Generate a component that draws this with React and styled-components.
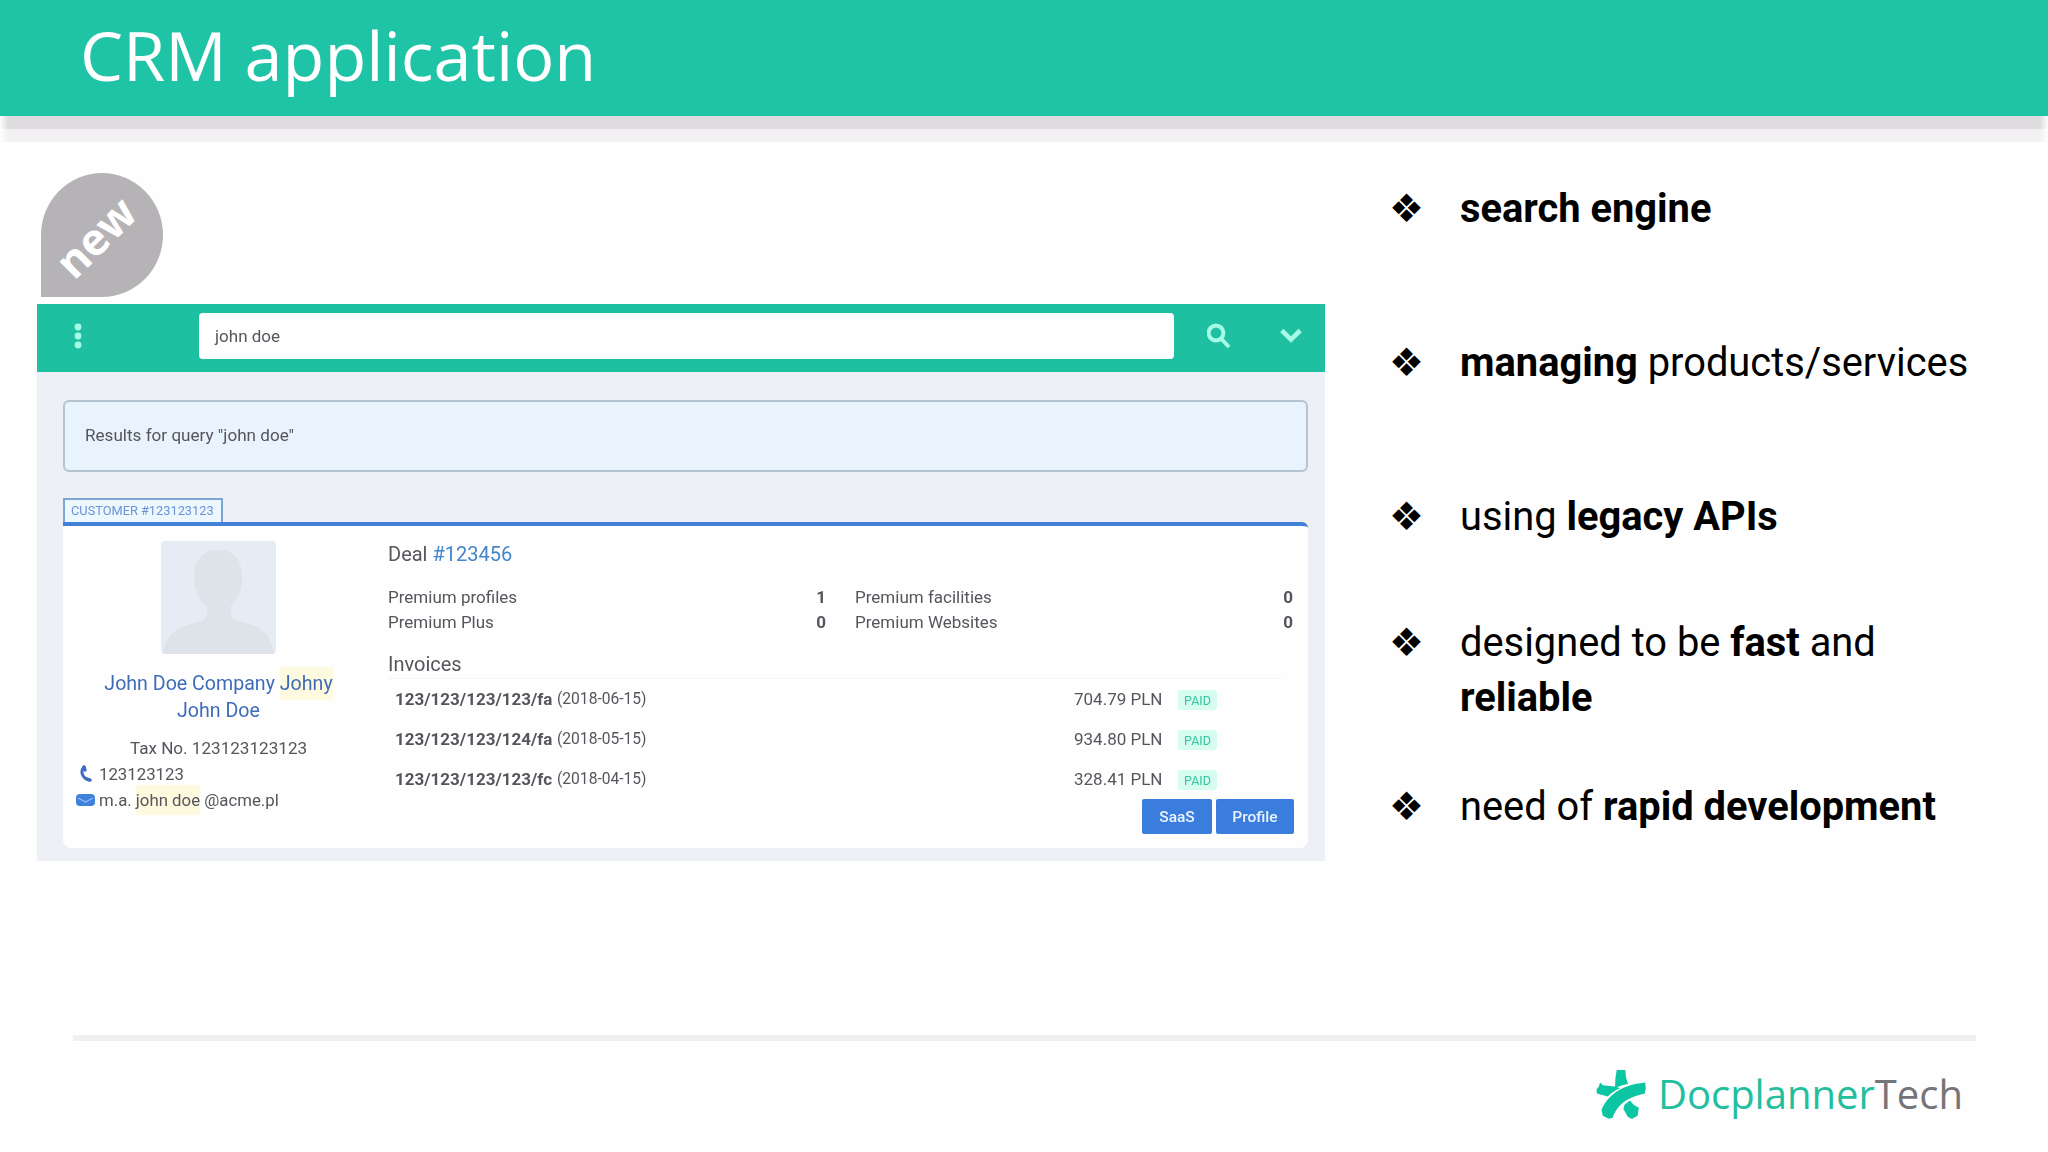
import React from 'react';
import styled, { createGlobalStyle } from 'styled-components';

const invoices = [
  { id: 1, name: '123/123/123/123/fa', date: '(2018-06-15)', price: '704.79 PLN' },
  { id: 2, name: '123/123/123/124/fa', date: '(2018-05-15)', price: '934.80 PLN' },
  { id: 3, name: '123/123/123/123/fc', date: '(2018-04-15)', price: '328.41 PLN' },
];

const products = [
  { name: 'Premium profiles', count: 1 },
  { name: 'Premium facilities', count: 0 },
  { name: 'Premium Plus', count: 0 },
  { name: 'Premium Websites', count: 0 },
];

function Logo() {
  return (
    <svg width="50" height="49" viewBox="0 0 150 148" fill="#0cc5a2">
      <path d="M62 0H88L90 22L96 42C80 45 68 49 57 53L58 26Z" />
      <path d="M12 38L20 46L56 50L72 54C56 62 44 70 35 80L2 71L1 59L8 50Z" />
      <path d="M148 38L128 41C92 46 40 66 16 120L20 138L38 147L50 144C62 112 84 84 146 72L150 56Z" />
      <path d="M102 92L114 106L129 114L125 138L108 148L96 142L82 118L86 104Z" />
    </svg>
  );
}

function Toolbar() {
  return (
    <Bar>
      <svg width="10" height="28" viewBox="0 0 10 28" fill="#a5fbe6">
        <circle cx="5" cy="5" r="3.4" />
        <circle cx="5" cy="14" r="3.4" />
        <circle cx="5" cy="23" r="3.4" />
      </svg>
      <SearchBox>john doe</SearchBox>
      <SearchIcon width="24" height="26" viewBox="0 0 24 26" fill="none" stroke="#a5fbe6" strokeWidth="4">
        <circle cx="9" cy="10" r="7.4" />
        <path d="M14.5 16L22 24" />
      </SearchIcon>
      <svg width="22" height="16" viewBox="0 0 22 16" fill="none" stroke="#a5fbe6" strokeWidth="4.6">
        <path d="M1.8 2.5L11 11.5L20.2 2.5" />
      </svg>
    </Bar>
  );
}

function Customer() {
  return (
    <Profile>
      <svg width="115" height="113" viewBox="0 0 115 113">
        <rect width="115" height="113" rx="4" fill="#e6ecf3" />
        <path
          d="M57 9C41 9 33 20 33 35C33 48 36 57 46 65C47 73 46 78 40 80C20 86 5 89 2 113H113C110 89 96 85 78 80C70 78 69 72 70 65C78 57 82 47 81 35C81 20 74 9 57 9Z"
          fill="#dde3e9"
        />
      </svg>
      <Name>
        John Doe Company <Mark>Johny</Mark>
        <br />
        John Doe
      </Name>
      <TaxNo>Tax No. 123123123123</TaxNo>
      <Contact>
        <svg width="19" height="18" viewBox="0 0 19 18" fill="none" stroke="#3e6cc4" strokeLinecap="round">
          <path d="M8 2C4 6 6 13 13 15" strokeWidth="3" />
          <path d="M8 2L9 5M11 14L14 15" strokeWidth="3.4" />
        </svg>
        <span>123123123</span>
      </Contact>
      <Contact>
        <svg width="19" height="12" viewBox="0 0 19 12">
          <rect width="19" height="12" rx="4" fill="#3f82dc" />
          <path d="M2 4L9.5 8L17 4" stroke="#8fbdf3" strokeWidth="1.4" fill="none" />
        </svg>
        <span>
          m.a. <Mark>john doe</Mark> @acme.pl
        </span>
      </Contact>
    </Profile>
  );
}

function Deal() {
  return (
    <Details>
      <Heading>
        Deal <Link>#123456</Link>
      </Heading>
      <Products>
        {products.map((product) => (
          <Product key={product.name}>
            <span>{product.name}</span>
            <b>{product.count}</b>
          </Product>
        ))}
      </Products>
      <Heading>Invoices</Heading>
      <Invoices>
        {invoices.map((invoice) => (
          <Invoice key={invoice.id}>
            <Number>{invoice.name}</Number>
            <Date>{invoice.date}</Date>
            <Price>{invoice.price}</Price>
            <Paid>PAID</Paid>
          </Invoice>
        ))}
      </Invoices>
      <Buttons>
        <Button $width={70}>SaaS</Button>
        <Button $width={78}>Profile</Button>
      </Buttons>
    </Details>
  );
}

function App() {
  return (
    <Slide>
      <GlobalStyle />
      <Header>CRM application</Header>
      <Shadow />
      <Content>
        <Left>
          <Badge>
            <BadgeText>new</BadgeText>
          </Badge>
          <Window>
            <Toolbar />
            <Results>
              <Query>Results for query "john doe"</Query>
              <Tag>CUSTOMER #123123123</Tag>
              <Card>
                <Customer />
                <Deal />
              </Card>
            </Results>
          </Window>
        </Left>
        <List>
          <Item>
            <Bullet>❖</Bullet>
            <p><b>search engine</b></p>
          </Item>
          <Item $gap={99}>
            <Bullet>❖</Bullet>
            <p><b>managing</b> products/services</p>
          </Item>
          <Item $gap={99}>
            <Bullet>❖</Bullet>
            <p>using <b>legacy APIs</b></p>
          </Item>
          <Item $gap={71}>
            <Bullet>❖</Bullet>
            <p>designed to be <b>fast</b> and<br /><b>reliable</b></p>
          </Item>
          <Item $gap={54}>
            <Bullet>❖</Bullet>
            <p>need of <b>rapid development</b></p>
          </Item>
        </List>
      </Content>
      <Footer>
        <Logo />
        <Brand>Docplanner<span>Tech</span></Brand>
      </Footer>
    </Slide>
  );
}

export default App;

const GlobalStyle = createGlobalStyle`
  * {
    box-sizing: border-box;
  }
  body {
    margin: 0;
    background-color: #fefefe;
    font-family: Roboto, sans-serif;
  }
  p {
    margin: 0;
  }
  svg {
    display: block;
    flex: none;
  }
`

const Slide = styled.div`
  display: flex;
  flex-direction: column;
  width: 2048px;
  height: 1152px;
  overflow: hidden;
`

const Header = styled.header`
  height: 116px;
  flex: none;
  padding-left: 80px;
  font-family: 'Open Sans', sans-serif;
  font-size: 68.4px;
  line-height: 110px;
  color: white;
  background-color: #1fc3a6;
`

const Shadow = styled.div`
  height: 26px;
  flex: none;
  background: linear-gradient(#dfdce0 0 13px, #f3f0f4 13px);
  mask-image: linear-gradient(90deg, transparent, #000 8px calc(100% - 8px), transparent);
`

const Content = styled.main`
  display: flex;
  height: 893px;
  flex: none;
  padding-left: 37px;
`

const Left = styled.section`
  width: 1288px;
  padding-top: 31px;
`

const Badge = styled.div`
  display: flex;
  align-items: center;
  justify-content: center;
  width: 122px;
  height: 124px;
  margin: 0 0 7px 4px;
  border-radius: 50% 50% 50% 0;
  background-color: #b6b3b7;
`

const BadgeText = styled.span`
  font-family: 'Open Sans', sans-serif;
  font-size: 44px;
  font-weight: 700;
  line-height: 45px;
  color: white;
  transform: rotate(-45deg) translate(-6px, -4px);
`

const Window = styled.div`
  height: 557px;
  background-color: #edf0f4;
  color: #55565c;
`

const Bar = styled.div`
  display: flex;
  align-items: center;
  height: 68px;
  padding: 0 23px 4px 36px;
  background-color: #1fc0a1;
`

const SearchBox = styled.div`
  width: 976px;
  height: 46px;
  margin-left: 116px;
  padding-left: 16px;
  border-radius: 4px;
  font-size: 17px;
  line-height: 46px;
  background-color: #fefeff;
  filter: blur(0.5px);
`

const SearchIcon = styled.svg`
  margin: 0 49px 0 33px;
`

const Results = styled.div`
  padding: 28px 17px 0 26px;
  filter: blur(0.5px);
`

const Query = styled.div`
  height: 72px;
  padding-left: 20px;
  border: 2px solid #b4c3d2;
  border-radius: 6px;
  font-size: 17.1px;
  line-height: 67px;
  background-color: #e9f3fd;
`

const Tag = styled.div`
  width: 160px;
  height: 24px;
  margin-top: 26px;
  padding-left: 6px;
  border: 2px solid #7da6d6;
  border-bottom: 0;
  font-size: 12.8px;
  line-height: 22px;
  white-space: nowrap;
  color: #6c93d6;
  background-color: #edf7fe;
`

const Card = styled.div`
  display: flex;
  height: 326px;
  border-top: 4px solid #4381d6;
  border-radius: 0 6px 8px 8px;
  background-color: #fefefe;
`

const Profile = styled.div`
  display: flex;
  flex-direction: column;
  align-items: center;
  flex: none;
  width: 325px;
  padding: 15px 14px 0 0;
`

const Name = styled.div`
  margin-top: 16px;
  font-size: 19.6px;
  line-height: 27px;
  text-align: center;
  white-space: nowrap;
  color: #3e6cb8;
`

const Mark = styled.span`
  padding: 5px 0;
  background-color: #fdfae0;
`

const TaxNo = styled.div`
  margin-top: 11px;
  font-size: 17.1px;
  line-height: 26px;
`

const Contact = styled.div`
  display: flex;
  align-items: center;
  align-self: flex-start;
  gap: 4px;
  margin-left: 13px;
  font-size: 16.8px;
  line-height: 26px;
  white-space: nowrap;
`

const Details = styled.div`
  width: 906px;
  padding-top: 14px;
`

const Heading = styled.div`
  font-size: 20px;
  line-height: 28px;
`

const Link = styled.span`
  color: #4285cc;
`

const Products = styled.div`
  display: grid;
  grid-template-columns: 438px 438px;
  column-gap: 29px;
  margin: 17px 0 15px;
`

const Product = styled.div`
  display: flex;
  justify-content: space-between;
  font-size: 17px;
  line-height: 25px;
`

const Invoices = styled.div`
  width: 894px;
  border-top: 1px solid #f6f3f7;
`

const Invoice = styled.div`
  display: flex;
  align-items: center;
  height: 40px;
  padding-left: 7px;
  font-size: 17px;
`

const Number = styled.span`
  width: 162px;
  font-weight: 700;
`

const Date = styled.span`
  font-size: 15.6px;
`

const Price = styled.span`
  width: 88px;
  margin-left: auto;
  white-space: nowrap;
`

const Paid = styled.span`
  width: 39px;
  height: 20px;
  margin: 2px 65px 0 16px;
  border-radius: 3px;
  font-size: 12.5px;
  line-height: 21px;
  text-align: center;
  color: #35c79b;
  background-color: #d6fbf0;
`

const Buttons = styled.div`
  display: flex;
  justify-content: flex-end;
  gap: 4px;
`

const Button = styled.button`
  width: ${(props) => props.$width}px;
  height: 35px;
  padding: 0;
  border: 0;
  border-radius: 2px;
  font-family: inherit;
  font-size: 15.5px;
  font-weight: 500;
  color: #e9f3ff;
  background-color: #3a7ddd;
`

const List = styled.section`
  padding: 39px 0 0 64px;
  font-size: 39.85px;
  line-height: 55px;
  color: black;
`

const Item = styled.div`
  display: flex;
  margin-top: ${(props) => props.$gap || 0}px;
  white-space: nowrap;
`

const Bullet = styled.span`
  width: 71px;
  font-family: 'DejaVu Sans', sans-serif;
  font-size: 39px;
`

const Footer = styled.footer`
  display: flex;
  justify-content: flex-end;
  height: 117px;
  margin: 0 72px 0 73px;
  padding: 29px 13px 0 0;
  border-top: 6px solid #f2eff3;
`

const Brand = styled.div`
  margin-left: 12px;
  font-family: 'Open Sans', sans-serif;
  font-size: 40px;
  line-height: 47px;
  color: #22bf9f;

  span {
    color: #777478;
  }
`
